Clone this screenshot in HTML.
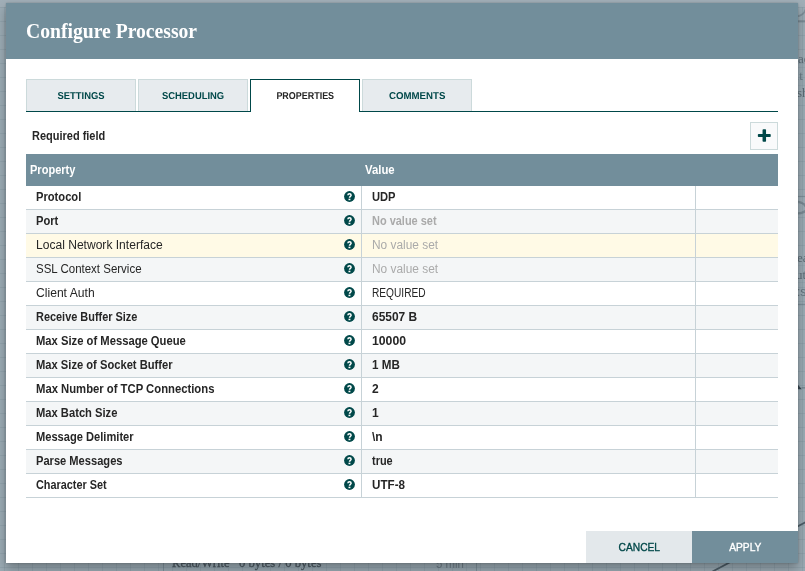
<!DOCTYPE html>
<html>
<head>
<meta charset="utf-8">
<title>Configure Processor</title>
<style>
html,body{margin:0;padding:0;}
body{width:805px;height:571px;overflow:hidden;position:relative;background:#a0afb8;font-family:"Liberation Sans",sans-serif;font-size:12px;color:#262626;}
#bg{position:absolute;left:0;top:0;width:805px;height:571px;overflow:hidden;will-change:transform;}
#dialog{will-change:transform;position:absolute;left:6px;top:3px;width:792px;height:560px;background:#fff;box-shadow:0 0 2px rgba(0,0,0,0.22),0 6px 10px rgba(0,0,0,0.28);}
#hdr{position:absolute;left:0;top:0;width:792px;height:56px;background:#728e9b;}
#title{position:absolute;left:20px;top:17px;font-family:"Liberation Serif",serif;font-weight:bold;font-size:21px;line-height:22px;color:#fff;white-space:nowrap;transform:scaleX(.935);transform-origin:0 50%;}
#tabs{position:absolute;left:20px;top:76px;width:752px;height:32px;border-bottom:1px solid #004849;}
.tab{position:absolute;top:0;width:108px;height:31px;border:1px solid #ccdadb;border-bottom:none;background:#e7ebee;color:#004849;text-align:center;line-height:31px;font-size:10px;font-weight:bold;white-space:nowrap;}
.tab span{display:inline-block;transform:scaleX(.94);text-rendering:geometricPrecision;}
.tab.sel{background:#fff;border-color:#004849;height:32px;color:#262626;}
#req{position:absolute;left:26px;top:125px;font-weight:bold;font-size:12px;line-height:16px;white-space:nowrap;transform:scaleX(.915);transform-origin:0 50%;}
#add{position:absolute;left:744px;top:119px;width:26px;height:26px;border:1px solid #ccdadb;background:#f9fafb;}
#thead{position:absolute;left:20px;top:151px;width:752px;height:32px;background:#728e9b;color:#fff;font-weight:bold;line-height:32px;}
#thead span{position:absolute;top:0;white-space:nowrap;transform:scaleX(.93);transform-origin:0 50%;}
#rows{position:absolute;left:20px;top:183px;width:752px;}
.r{position:relative;height:23px;border-bottom:1px solid #c7d2d7;background:#fff;line-height:22px;white-space:nowrap;}
.r.e{background:#f4f6f7;}
.r.h{background:#fffae6;}
.r .n{position:absolute;left:10px;top:0;transform-origin:0 50%;}
.r .v{position:absolute;left:346px;top:0;transform-origin:0 50%;}
.r .c1{position:absolute;left:335px;top:0;width:1px;height:24px;background:#c7d2d7;}
.r .c2{position:absolute;left:669px;top:0;width:1px;height:24px;background:#c7d2d7;}
.r .q{position:absolute;left:318px;top:5px;width:11px;height:11px;}
.b{font-weight:bold;}
.u{color:#aaaaaa;}
#cancel,#apply{position:absolute;top:528px;width:106px;height:32px;line-height:32px;text-align:center;font-size:11px;font-weight:normal;-webkit-text-stroke:0.35px currentColor;white-space:nowrap;}
#cancel span,#apply span{display:inline-block;transform:scaleX(.93);}
#cancel{left:580px;background:#e3e8eb;color:#004849;}
#apply{left:686px;background:#728e9b;color:#fff;}
</style>
</head>
<body>
<div id="bg">
<svg width="805" height="571" viewBox="0 0 805 571" style="position:absolute;left:0;top:0">
  <rect x="0" y="0" width="805" height="571" fill="#9babb4"/>
  <rect x="0" y="0" width="805" height="7" fill="#a0aeb7"/>
  <path d="M163.5 560V571M476.5 560V571" stroke="#7f919b" stroke-width="1"/>
  <path d="M712.5 571.5L806 522" stroke="#4c5c66" stroke-width="1.8" fill="none"/>
    <path d="M797 201.5c5 .5 8 3 10 7M797 213.5c4 0 7-1 10-3.5" stroke="#7a8a94" stroke-width="2.2" fill="none"/>
  <path d="M797 16.3c4.5-.5 7.5-3 9-7.5" stroke="#7f8f99" stroke-width="1.8" fill="none"/><path d="M797 21.3H805" stroke="#7f8f99" stroke-width="2.2" fill="none"/>
  <path d="M798 384.8V389.2H801.8Z" fill="#36454f"/>
  <path d="M801.5 387.8H805" stroke="#7b8b95" stroke-width="1.6"/>
  <path d="M798 304.5H805" stroke="#7f8f99" stroke-width="1.4"/>
  <path d="M798 196.5H805" stroke="#7f8f99" stroke-width="1.2"/>
  <g stroke="#8f9fa9" stroke-width="1" opacity="0.5"><path d="M798 67.5H805M798 85.5H805M798 265.5H805M798 282.5H805"/></g>
</svg>
<div style="position:absolute;left:0;top:7px;width:805px;height:564px;background:repeating-linear-gradient(to right,transparent 0,transparent 4px,rgba(95,118,132,.16) 4px,rgba(95,118,132,.16) 5px,transparent 5px,transparent 14px),repeating-linear-gradient(to bottom,rgba(95,118,132,.16) 0,rgba(95,118,132,.16) 1px,transparent 1px,transparent 14px);"></div>
<div style="position:absolute;left:172px;top:555px;font-family:'Liberation Serif',serif;font-size:13px;line-height:16px;color:#4c5962;-webkit-text-stroke:0.3px #4c5962;white-space:nowrap;transform-origin:0 50%;transform:scaleX(.968)">Read/Write</div>
<div style="position:absolute;left:239px;top:555px;font-family:'Liberation Serif',serif;font-size:13px;line-height:16px;color:#4c5962;-webkit-text-stroke:0.3px #4c5962;white-space:nowrap;transform-origin:0 50%;transform:scaleX(.976)">0 bytes / 0 bytes</div>
<div style="position:absolute;left:436px;top:556px;font-family:'Liberation Sans',sans-serif;font-size:12px;line-height:16px;color:#6c7b85;white-space:nowrap;transform-origin:0 50%;transform:scaleX(.95)">5 min</div>
<div style="position:absolute;left:798px;top:51px;font-family:'Liberation Serif',serif;font-size:13px;line-height:16px;color:#5c6b75;white-space:nowrap;">ae</div>
<div style="position:absolute;left:796px;top:68px;font-family:'Liberation Serif',serif;font-size:13px;line-height:16px;color:#6a7983;white-space:nowrap;">.t</div>
<div style="position:absolute;left:797px;top:85px;font-family:'Liberation Serif',serif;font-size:13px;line-height:16px;color:#5c6b75;white-space:nowrap;">sh</div>
<div style="position:absolute;left:797px;top:250px;font-family:'Liberation Serif',serif;font-size:13px;line-height:16px;color:#5c6b75;white-space:nowrap;">ea</div>
<div style="position:absolute;left:796px;top:267px;font-family:'Liberation Serif',serif;font-size:13px;line-height:16px;color:#5c6b75;white-space:nowrap;">ut</div>
<div style="position:absolute;left:797px;top:284px;font-family:'Liberation Sans',sans-serif;font-size:12px;line-height:16px;color:#65747e;white-space:nowrap;">:s</div>

</div>
<div id="dialog">
  <div id="hdr"><div id="title">Configure Processor</div></div>
  <div id="tabs">
    <div class="tab" style="left:0"><span>SETTINGS</span></div>
    <div class="tab" style="left:112px"><span>SCHEDULING</span></div>
    <div class="tab sel" style="left:224px"><span style="transform:scaleX(.895)">PROPERTIES</span></div>
    <div class="tab" style="left:336px"><span style="transform:scaleX(.967)">COMMENTS</span></div>
  </div>
  <div id="req">Required field</div>
  <div id="add"><svg width="26" height="26" viewBox="0 0 26 26"><rect x="6.85" y="10.9" width="12.9" height="3.2" rx="0.8" fill="#004849"/><rect x="11.55" y="6.2" width="3.5" height="12.6" rx="0.8" fill="#004849"/></svg></div>
  <div id="thead"><span style="left:4px;transform:scaleX(.92)">Property</span><span style="left:339px;transform:scaleX(.945)">Value</span></div>
  <div id="rows">
    <div class="r"><span class="n b" style="transform:scaleX(0.93)">Protocol</span><svg class="q" viewBox="0 0 11 11"><circle cx="5.5" cy="5.5" r="5.4" fill="#004849"/><path d="M3.9 4.3c0-1 .7-1.55 1.6-1.55s1.6.55 1.6 1.45c0 1.1-1.6 1.15-1.6 2.5" stroke="#fff" stroke-width="1.5" fill="none"/><rect x="4.5" y="7.7" width="1.9" height="1.5" fill="#fff"/></svg><i class="c1"></i><span class="v b" style="transform:scaleX(0.93)">UDP</span><i class="c2"></i></div>
    <div class="r e"><span class="n b" style="transform:scaleX(0.93)">Port</span><svg class="q" viewBox="0 0 11 11"><circle cx="5.5" cy="5.5" r="5.4" fill="#004849"/><path d="M3.9 4.3c0-1 .7-1.55 1.6-1.55s1.6.55 1.6 1.45c0 1.1-1.6 1.15-1.6 2.5" stroke="#fff" stroke-width="1.5" fill="none"/><rect x="4.5" y="7.7" width="1.9" height="1.5" fill="#fff"/></svg><i class="c1"></i><span class="v b u" style="transform:scaleX(0.914)">No value set</span><i class="c2"></i></div>
    <div class="r h"><span class="n" style="transform:scaleX(1.005)">Local Network Interface</span><svg class="q" viewBox="0 0 11 11"><circle cx="5.5" cy="5.5" r="5.4" fill="#004849"/><path d="M3.9 4.3c0-1 .7-1.55 1.6-1.55s1.6.55 1.6 1.45c0 1.1-1.6 1.15-1.6 2.5" stroke="#fff" stroke-width="1.5" fill="none"/><rect x="4.5" y="7.7" width="1.9" height="1.5" fill="#fff"/></svg><i class="c1"></i><span class="v u" style="transform:scaleX(0.99)">No value set</span><i class="c2"></i></div>
    <div class="r e"><span class="n" style="transform:scaleX(0.957)">SSL Context Service</span><svg class="q" viewBox="0 0 11 11"><circle cx="5.5" cy="5.5" r="5.4" fill="#004849"/><path d="M3.9 4.3c0-1 .7-1.55 1.6-1.55s1.6.55 1.6 1.45c0 1.1-1.6 1.15-1.6 2.5" stroke="#fff" stroke-width="1.5" fill="none"/><rect x="4.5" y="7.7" width="1.9" height="1.5" fill="#fff"/></svg><i class="c1"></i><span class="v u" style="transform:scaleX(0.99)">No value set</span><i class="c2"></i></div>
    <div class="r"><span class="n" style="transform:scaleX(1.01)">Client Auth</span><svg class="q" viewBox="0 0 11 11"><circle cx="5.5" cy="5.5" r="5.4" fill="#004849"/><path d="M3.9 4.3c0-1 .7-1.55 1.6-1.55s1.6.55 1.6 1.45c0 1.1-1.6 1.15-1.6 2.5" stroke="#fff" stroke-width="1.5" fill="none"/><rect x="4.5" y="7.7" width="1.9" height="1.5" fill="#fff"/></svg><i class="c1"></i><span class="v" style="transform:scaleX(0.847)">REQUIRED</span><i class="c2"></i></div>
    <div class="r e"><span class="n b" style="transform:scaleX(0.91)">Receive Buffer Size</span><svg class="q" viewBox="0 0 11 11"><circle cx="5.5" cy="5.5" r="5.4" fill="#004849"/><path d="M3.9 4.3c0-1 .7-1.55 1.6-1.55s1.6.55 1.6 1.45c0 1.1-1.6 1.15-1.6 2.5" stroke="#fff" stroke-width="1.5" fill="none"/><rect x="4.5" y="7.7" width="1.9" height="1.5" fill="#fff"/></svg><i class="c1"></i><span class="v b" style="transform:scaleX(0.995)">65507 B</span><i class="c2"></i></div>
    <div class="r"><span class="n b" style="transform:scaleX(0.936)">Max Size of Message Queue</span><svg class="q" viewBox="0 0 11 11"><circle cx="5.5" cy="5.5" r="5.4" fill="#004849"/><path d="M3.9 4.3c0-1 .7-1.55 1.6-1.55s1.6.55 1.6 1.45c0 1.1-1.6 1.15-1.6 2.5" stroke="#fff" stroke-width="1.5" fill="none"/><rect x="4.5" y="7.7" width="1.9" height="1.5" fill="#fff"/></svg><i class="c1"></i><span class="v b" style="transform:scaleX(1.02)">10000</span><i class="c2"></i></div>
    <div class="r e"><span class="n b" style="transform:scaleX(0.931)">Max Size of Socket Buffer</span><svg class="q" viewBox="0 0 11 11"><circle cx="5.5" cy="5.5" r="5.4" fill="#004849"/><path d="M3.9 4.3c0-1 .7-1.55 1.6-1.55s1.6.55 1.6 1.45c0 1.1-1.6 1.15-1.6 2.5" stroke="#fff" stroke-width="1.5" fill="none"/><rect x="4.5" y="7.7" width="1.9" height="1.5" fill="#fff"/></svg><i class="c1"></i><span class="v b" style="transform:scaleX(0.97)">1 MB</span><i class="c2"></i></div>
    <div class="r"><span class="n b" style="transform:scaleX(0.94)">Max Number of TCP Connections</span><svg class="q" viewBox="0 0 11 11"><circle cx="5.5" cy="5.5" r="5.4" fill="#004849"/><path d="M3.9 4.3c0-1 .7-1.55 1.6-1.55s1.6.55 1.6 1.45c0 1.1-1.6 1.15-1.6 2.5" stroke="#fff" stroke-width="1.5" fill="none"/><rect x="4.5" y="7.7" width="1.9" height="1.5" fill="#fff"/></svg><i class="c1"></i><span class="v b" style="transform:scaleX(1)">2</span><i class="c2"></i></div>
    <div class="r e"><span class="n b" style="transform:scaleX(0.932)">Max Batch Size</span><svg class="q" viewBox="0 0 11 11"><circle cx="5.5" cy="5.5" r="5.4" fill="#004849"/><path d="M3.9 4.3c0-1 .7-1.55 1.6-1.55s1.6.55 1.6 1.45c0 1.1-1.6 1.15-1.6 2.5" stroke="#fff" stroke-width="1.5" fill="none"/><rect x="4.5" y="7.7" width="1.9" height="1.5" fill="#fff"/></svg><i class="c1"></i><span class="v b" style="transform:scaleX(1)">1</span><i class="c2"></i></div>
    <div class="r"><span class="n b" style="transform:scaleX(0.926)">Message Delimiter</span><svg class="q" viewBox="0 0 11 11"><circle cx="5.5" cy="5.5" r="5.4" fill="#004849"/><path d="M3.9 4.3c0-1 .7-1.55 1.6-1.55s1.6.55 1.6 1.45c0 1.1-1.6 1.15-1.6 2.5" stroke="#fff" stroke-width="1.5" fill="none"/><rect x="4.5" y="7.7" width="1.9" height="1.5" fill="#fff"/></svg><i class="c1"></i><span class="v b" style="transform:scaleX(1)">\n</span><i class="c2"></i></div>
    <div class="r e"><span class="n b" style="transform:scaleX(0.926)">Parse Messages</span><svg class="q" viewBox="0 0 11 11"><circle cx="5.5" cy="5.5" r="5.4" fill="#004849"/><path d="M3.9 4.3c0-1 .7-1.55 1.6-1.55s1.6.55 1.6 1.45c0 1.1-1.6 1.15-1.6 2.5" stroke="#fff" stroke-width="1.5" fill="none"/><rect x="4.5" y="7.7" width="1.9" height="1.5" fill="#fff"/></svg><i class="c1"></i><span class="v b" style="transform:scaleX(0.91)">true</span><i class="c2"></i></div>
    <div class="r"><span class="n b" style="transform:scaleX(0.905)">Character Set</span><svg class="q" viewBox="0 0 11 11"><circle cx="5.5" cy="5.5" r="5.4" fill="#004849"/><path d="M3.9 4.3c0-1 .7-1.55 1.6-1.55s1.6.55 1.6 1.45c0 1.1-1.6 1.15-1.6 2.5" stroke="#fff" stroke-width="1.5" fill="none"/><rect x="4.5" y="7.7" width="1.9" height="1.5" fill="#fff"/></svg><i class="c1"></i><span class="v b" style="transform:scaleX(0.97)">UTF-8</span><i class="c2"></i></div>
  </div>
  <div id="cancel"><span>CANCEL</span></div>
  <div id="apply"><span>APPLY</span></div>
</div>
</body>
</html>
